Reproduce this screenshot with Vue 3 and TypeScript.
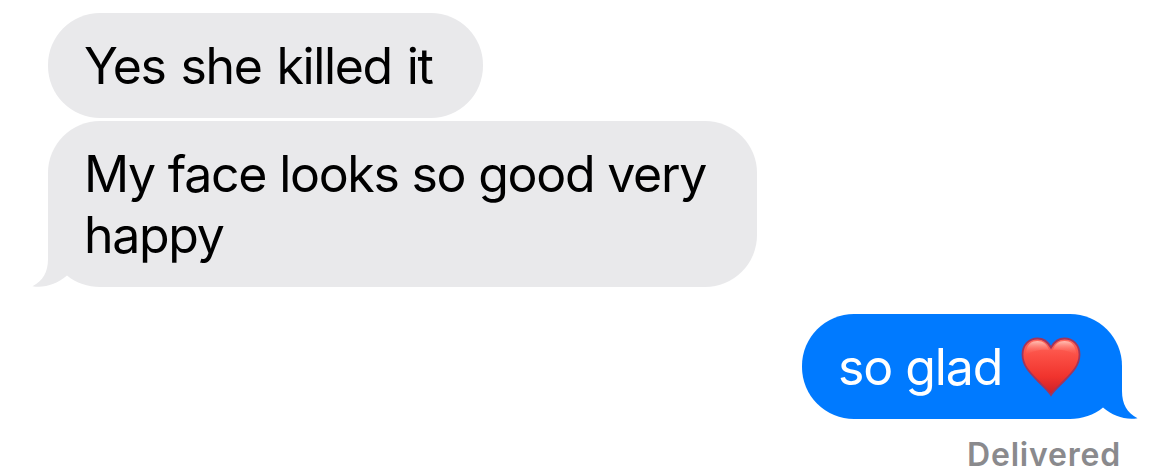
<script setup lang="ts">
interface Message {
  id: number;
  text: string;
  from: 'them' | 'me';
  size: 'short' | 'long' | 'reply';
  tail: boolean;
  heart?: boolean;
}

const messages: Message[] = [
  { id: 1, text: 'Yes she killed it', from: 'them', size: 'short', tail: false },
  { id: 2, text: 'My face looks so good very happy', from: 'them', size: 'long', tail: true },
  { id: 3, text: 'so glad', from: 'me', size: 'reply', tail: true, heart: true },
];
</script>

<template>
  <main class="thread">
    <div
      v-for="message in messages"
      :key="message.id"
      class="bubble"
      :class="[message.from, message.size, { tailed: message.tail }]"
    >
      <span class="text">{{ message.text }}</span>
      <svg v-if="message.heart" class="heart" viewBox="0 0 60 60" role="img" aria-label="red heart">
        <defs>
          <linearGradient id="heart-fill" x1="0" y1="0" x2="0" y2="1">
            <stop offset="0" stop-color="#ff6a5e" />
            <stop offset="0.3" stop-color="#fb4f45" />
            <stop offset="0.68" stop-color="#f0332d" />
            <stop offset="1" stop-color="#c92029" />
          </linearGradient>
          <linearGradient id="heart-shine" x1="0" y1="0" x2="0" y2="1">
            <stop offset="0" stop-color="#ffc5b9" stop-opacity="0.95" />
            <stop offset="1" stop-color="#ff6258" stop-opacity="0" />
          </linearGradient>
        </defs>
        <path
          d="M30 58C27.5 54 23 50 17 44C8 35 1.5 28 1.5 17.5C1.5 8 8 1.5 16.5 1.5C22.5 1.5 27 5 30 10.5C33 5 37.5 1.5 43.5 1.5C52 1.5 58.5 8 58.5 17.5C58.5 28 52 35 43 44C37 50 32.5 54 30 58Z"
          fill="url(#heart-fill)"
          stroke="#a0355c"
          stroke-width="1.8"
        />
        <path d="M5 15C6 7 11 4 16.5 4C22 4 26 7 28 13C22 12 12 13 5 18Z" fill="url(#heart-shine)" />
        <path d="M55 15C54 7 49 4 43.5 4C38 4 34 7 32 13C38 12 48 13 55 18Z" fill="url(#heart-shine)" />
      </svg>
      <svg v-if="message.tail" class="tail" viewBox="0 0 70 52">
        <path d="M16 0V24C16 37 11 46 0.5 51.2C12 53.5 25 49 35 40.5C44 48 56 52 68 52H70V0Z" />
      </svg>
    </div>
    <div class="status">Delivered</div>
  </main>
</template>

<style>
body {
  margin: 0;
  background: #fff;
}
</style>

<style scoped>
.thread {
  display: flex;
  flex-direction: column;
  box-sizing: border-box;
  width: 1170px;
  height: 475px;
  padding: 13px 48px 0;
  overflow: hidden;
  font-family: Inter, "Liberation Sans", sans-serif;
}

.bubble {
  position: relative;
  box-sizing: border-box;
  flex-shrink: 0;
  padding: 23px 37px 21px 36px;
  border-radius: 52px;
  font-size: 50px;
  line-height: 61px;
  letter-spacing: -1.3px;
}

.them {
  align-self: flex-start;
  background: #e9e9eb;
  color: #000;
}

.me {
  align-self: flex-end;
  background: #007aff;
  color: #fff;
}

.short {
  width: 435px;
  height: 105px;
  margin-bottom: 3px;
  letter-spacing: -1.4px;
  word-spacing: 2.4px;
}

.long {
  width: 709px;
  height: 166px;
  margin-bottom: 27px;
  word-spacing: 0.2px;
}

.reply {
  display: flex;
  align-items: center;
  gap: 20px;
  width: 320px;
  height: 105px;
  letter-spacing: -1.1px;
}

/* the tail replaces the rounded corner it grows out of */
.them.tailed {
  border-bottom-left-radius: 0;
  background: linear-gradient(#e9e9eb, #e9e9eb) 0 0 / 100% calc(100% - 52px) no-repeat,
    linear-gradient(#e9e9eb, #e9e9eb) 100% 100% / calc(100% - 53px) 52px no-repeat;
}

.me.tailed {
  border-bottom-right-radius: 0;
  background: linear-gradient(#007aff, #007aff) 0 0 / 100% calc(100% - 52px) no-repeat,
    linear-gradient(#007aff, #007aff) 0 100% / calc(100% - 53px) 52px no-repeat;
}

.tail {
  position: absolute;
  bottom: 0;
  width: 70px;
  height: 52px;
}

.them .tail {
  left: -16px;
  fill: #e9e9eb;
}

.me .tail {
  right: -16px;
  fill: #007aff;
  transform: scaleX(-1);
}

.text,
.heart {
  position: relative;
  z-index: 1;
}

.heart {
  flex: none;
  width: 60px;
  height: 60px;
  margin: -2px 0 0 -1px;
}

.me .text {
  white-space: nowrap;
}

.status {
  align-self: flex-end;
  flex-shrink: 0;
  margin: 15px 1px 0 0;
  color: #8a8a8d;
  font-size: 32px;
  font-weight: 600;
  line-height: 41px;
  letter-spacing: 0.8px;
}
</style>
